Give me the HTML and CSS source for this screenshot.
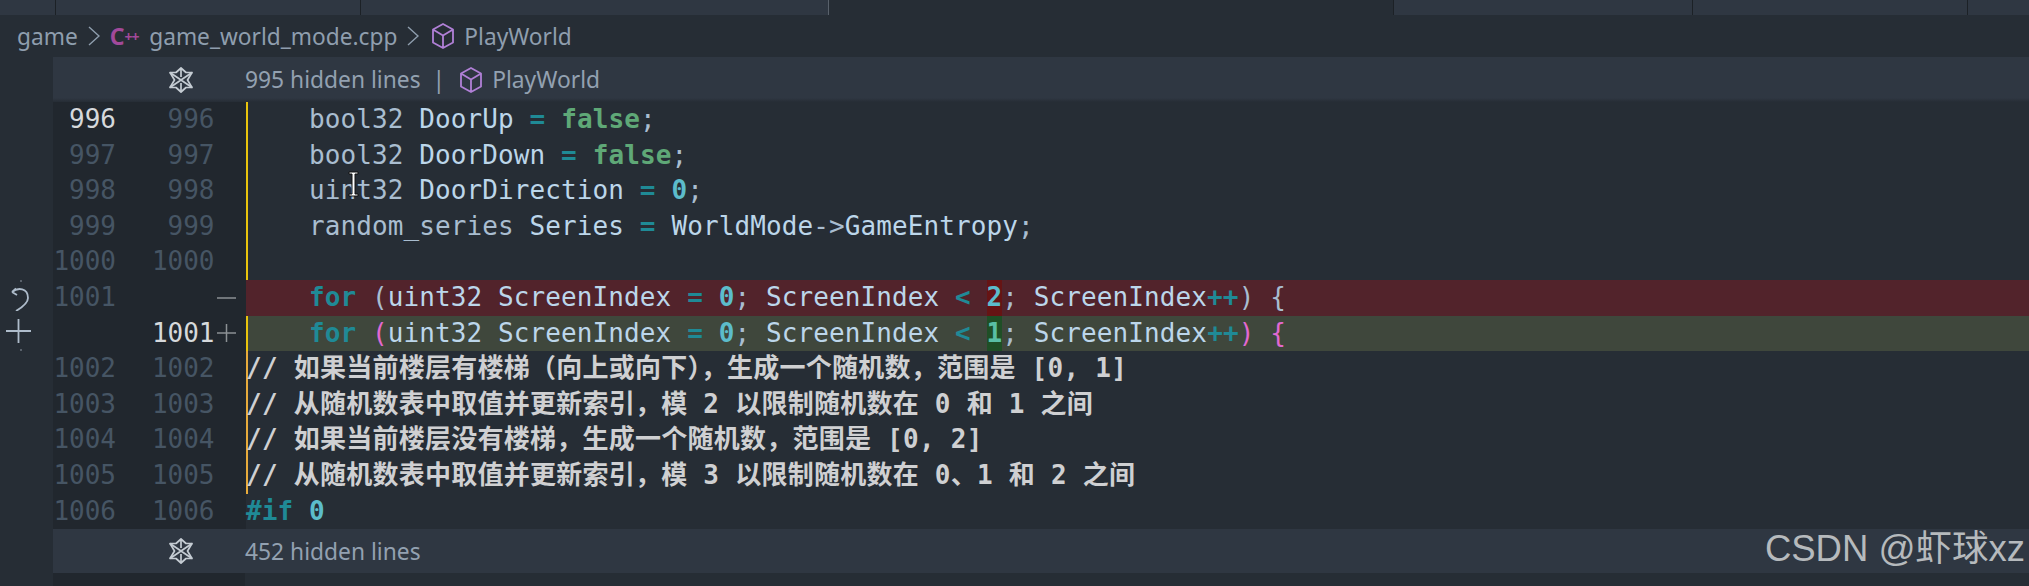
FILE: index.html
```html
<!DOCTYPE html>
<html lang="zh">
<head>
<meta charset="utf-8">
<title>game_world_mode.cpp</title>
<link rel="stylesheet" href="styles.css">
</head>
<body>
<div class="tabs">
  <div class="tab t1"></div>
  <div class="tab t2"></div>
  <div class="tab t3"></div>
  <div class="tab active"></div>
  <div class="tab t4"></div>
  <div class="tab t5"></div>
  <div class="tab t6"></div>
</div>
<div class="crumbs">
  <span>game</span>
  <svg class="chev" viewBox="0 0 12 24"><path d="M1 3l10 9-10 9"/></svg>
  <span class="cpp"><b>C</b><i>++</i></span>
  <span>game_world_mode.cpp</span>
  <svg class="chev" viewBox="0 0 12 24"><path d="M1 3l10 9-10 9"/></svg>
  <svg class="cube" viewBox="0 0 24 28"><path d="M12 2l10 5.500v13L12 26 2 20.500v-13zM2 7.500l10 6 10-6M12 13.500V26"/></svg>
  <span>PlayWorld</span>
</div>
<div class="main">
  <div class="glyphs">
    <span class="dot"></span>
    <svg class="undo" viewBox="0 0 20 24"><path d="M2 5l4-3.500M2 5l5 3M2 5C8 0 18 1 18 11 18 16 11 21 6 24"/></svg>
    <svg class="plus" viewBox="0 0 25 24"><path d="M12.500 0v24M0 12h25"/></svg>
    <span class="dot lower"></span>
  </div>
  <div class="editor">
    <div class="fold">
      <div class="fold-gut"><svg class="unfold" viewBox="0 0 24 26"><path d="M12 1L7 5.500H1L5.500 13 1 20.500h6l5 4.500 5-4.500h6L18.500 13 23 5.500h-6z"/><path d="M12 1v9M12 16v9M1 5.500L12 13 23 5.500M1 20.500L12 13l11 7.500"/></svg></div>
      <span class="fold-text">995 hidden lines</span><span class="sep">|</span>
      <svg class="cube small" viewBox="0 0 24 28"><path d="M12 2l10 5.500v13L12 26 2 20.500v-13zM2 7.500l10 6 10-6M12 13.500V26"/></svg>
      <span class="fold-text">PlayWorld</span>
    </div>
    <div class="rows">
      <div class="row"><span class="n hi">996</span><span class="n n2">996</span><span class="mk"></span><code class="c y">    bool32 <u>DoorUp</u> <s>=</s> <em>false</em>;</code></div>
      <div class="row"><span class="n">997</span><span class="n n2">997</span><span class="mk"></span><code class="c y">    bool32 <u>DoorDown</u> <s>=</s> <em>false</em>;</code></div>
      <div class="row"><span class="n">998</span><span class="n n2">998</span><span class="mk"></span><code class="c y">    uint32 <u>DoorDirection</u> <s>=</s> <q>0</q>;</code></div>
      <div class="row"><span class="n">999</span><span class="n n2">999</span><span class="mk"></span><code class="c y">    random_series <u>Series</u> <s>=</s> <u>WorldMode</u>-&gt;<u>GameEntropy</u>;</code></div>
      <div class="row"><span class="n">1000</span><span class="n n2">1000</span><span class="mk"></span><code class="c y"></code></div>
      <div class="row"><span class="n">1001</span><span class="n n2"></span><span class="mk"><svg class="sign" viewBox="0 0 19 18"><path d="M0 9h19"/></svg></span><code class="c del">    <s class="kw">for</s> (<u>uint32 ScreenIndex</u> <s>=</s> <q>0</q>; <u>ScreenIndex</u> <s>&lt;</s> <q class="xd">2</q>; <u>ScreenIndex</u><s>++</s>) {</code></div>
      <div class="row"><span class="n"></span><span class="n n2 hi">1001</span><span class="mk"><svg class="sign" viewBox="0 0 19 18"><path d="M0 9h19M9.500 0v18"/></svg></span><code class="c add y">    <s class="kw">for</s> <a>(</a><u>uint32 ScreenIndex</u> <s>=</s> <q>0</q>; <u>ScreenIndex</u> <s>&lt;</s> <q class="xa">1</q>; <u>ScreenIndex</u><s>++</s><a>)</a> <a>{</a></code></div>
      <div class="row"><span class="n">1002</span><span class="n n2">1002</span><span class="mk"></span><code class="c o cm">// 如果当前楼层有楼梯（向上或向下），生成一个随机数，范围是 [0, 1]</code></div>
      <div class="row"><span class="n">1003</span><span class="n n2">1003</span><span class="mk"></span><code class="c o cm">// 从随机数表中取值并更新索引，模 2 以限制随机数在 0 和 1 之间</code></div>
      <div class="row"><span class="n">1004</span><span class="n n2">1004</span><span class="mk"></span><code class="c o cm">// 如果当前楼层没有楼梯，生成一个随机数，范围是 [0, 2]</code></div>
      <div class="row"><span class="n">1005</span><span class="n n2">1005</span><span class="mk"></span><code class="c o cm">// 从随机数表中取值并更新索引，模 3 以限制随机数在 0、1 和 2 之间</code></div>
      <div class="row"><span class="n">1006</span><span class="n n2">1006</span><span class="mk"></span><code class="c pp"><s class="kw">#if</s> <q>0</q></code></div>
    </div>
    <div class="fold bottom">
      <div class="fold-gut"><svg class="unfold" viewBox="0 0 24 26"><path d="M12 1L7 5.500H1L5.500 13 1 20.500h6l5 4.500 5-4.500h6L18.500 13 23 5.500h-6z"/><path d="M12 1v9M12 16v9M1 5.500L12 13 23 5.500M1 20.500L12 13l11 7.500"/></svg></div>
      <span class="fold-text">452 hidden lines</span>
    </div>
    <div class="tail"></div>
  </div>
</div>
<svg class="ibeam" viewBox="0 0 11 26"><path class="ibeam-o" d="M1 1h9v2H7v20h3v2H1v-2h3V3H1z"/></svg>
<div class="watermark">CSDN @虾球xz</div>
</body>
</html>
```
FILE: styles.css
```css
* { box-sizing: border-box; }
html, body { margin: 0; padding: 0; }
body {
  width: 2029px;
  height: 586px;
  overflow: hidden;
  background: #262d35;
  position: relative;
  font-family: "Noto Sans", "Noto Sans CJK SC", sans-serif;
}
.tabs { display: flex; height: 15px; }
.tab { background: #2f3742; border-right: 1px solid #1c2126; height: 15px; }
.t1 { width: 56px; }
.t2 { width: 305px; }
.t3 { width: 468px; border-right-color: #59616b; }
.active { width: 565px; background: #262d35; border-right-color: #1c2126; }
.t4 { width: 299px; }
.t5 { width: 275px; }
.t6 { flex: 1; border-right: 0; }
.crumbs {
  height: 42px;
  display: flex;
  align-items: center;
  padding-left: 17px;
  font-size: 22.700px;
  color: #8f9eae;
}
.chev { width: 12px; height: 24px; margin: 0 10px; fill: none; stroke: #8f9eae; stroke-width: 1.4; flex: none; }
.chev + .cube { margin-left: 2px; }
.cpp { color: #a2499a; width: 39.500px; display: flex; align-items: center; font-family: "Noto Sans", sans-serif; flex: none; }
.cpp b { font-size: 23px; font-weight: 700; }
.cpp i { font-size: 14px; font-style: normal; font-weight: 700; letter-spacing: -1px; }
.cube { width: 24px; height: 28px; margin-right: 9px; fill: none; stroke: #b180d7; stroke-width: 1.8; stroke-linejoin: round; flex: none; }
.main { display: flex; height: 529px; }
.glyphs { width: 53px; padding-top: 223px; display: flex; flex-direction: column; align-items: flex-start; flex: none; }
.dot { width: 2px; height: 2px; margin-left: 20px; background: #59616b; }
.dot.lower { margin-top: 6px; }
.undo { width: 20px; height: 24px; margin: 5px 0 0 10px; fill: none; stroke: #aebccb; stroke-width: 1.8; }
.plus { width: 25px; height: 24px; margin: 8px 0 0 6px; fill: none; stroke: #aebccb; stroke-width: 1.8; }
.editor { flex: 1; min-width: 0; }
.fold {
  height: 45px;
  display: flex;
  align-items: center;
  background: linear-gradient(to bottom, #2f3742 0, #2f3742 41px, #262d35 45px);
  font-size: 22.800px;
  color: #93a1b1;
}
.fold.bottom { height: 44px; background: #2f3742; }
.fold-gut { width: 192px; flex: none; display: flex; justify-content: flex-end; padding-right: 52px; }
.fold-text { white-space: pre; }
.sep { margin: 0 14px 0 12px; }
.unfold { width: 24px; height: 26px; fill: none; stroke: #c5ccd3; stroke-width: 1.700; stroke-linejoin: round; }
.rows { display: flex; flex-direction: column; }
.row { height: 35.600px; display: flex; font-family: "DejaVu Sans Mono", monospace; font-size: 26px; line-height: 35.600px; }
.n { width: 63px; text-align: right; color: #465564; flex: none; background: #21272e; }
.n2 { width: 98.500px; }
.n.hi { color: #d6d9dc; }
.mk { width: 31.500px; flex: none; background: #21272e; display: flex; align-items: center; padding-left: 2px; }
.sign { width: 19px; height: 18px; fill: none; stroke: #8b9094; stroke-width: 1.500; }
.c { flex: 1; white-space: pre; font-family: inherit; color: #a9bdd0; letter-spacing: 0.1px; }
.c.y { box-shadow: inset 2px 0 0 #e9c40d; }
.c.o { box-shadow: inset 2px 0 0 #e7ab3c; }
.c.del { background: #52232b; }
.c.add { background: #3f473c; }
.c u { text-decoration: none; color: #bcd6ea; }
.c s { text-decoration: none; color: #1f8a96; font-weight: 700; }
.c em { font-style: normal; font-weight: 700; color: #5fa877; }
.c q { quotes: none; color: #5cbccb; font-weight: 700; }
.c a { color: #e268d1; }
.c .kw { color: #1f8a96; }
.c .xd, .c .xa { display: inline-block; height: 35.600px; vertical-align: top; }
.c .xd { background: #661414; }
.c .xa { background: #1f4f26; color: #59bfa5; }
.cm { color: #cfd0d2; font-weight: 700; font-family: "DejaVu Sans Mono", "Noto Sans CJK SC", monospace; }
.c.cm { color: #cfd0d2; letter-spacing: 0.250px; }
.pp { color: #1f8a96; }
.tail { height: 13px; width: 192px; background: #21272e; }
.ibeam { position: absolute; left: 348px; top: 171px; width: 11px; height: 26px; }
.ibeam-o { fill: #fff; stroke: #111; stroke-width: 1; }
.watermark {
  position: absolute;
  right: 4px;
  bottom: 14px;
  font-family: "Liberation Sans", "Noto Sans CJK SC", sans-serif;
  font-size: 36.500px;
  color: #b6babd;
}
```
